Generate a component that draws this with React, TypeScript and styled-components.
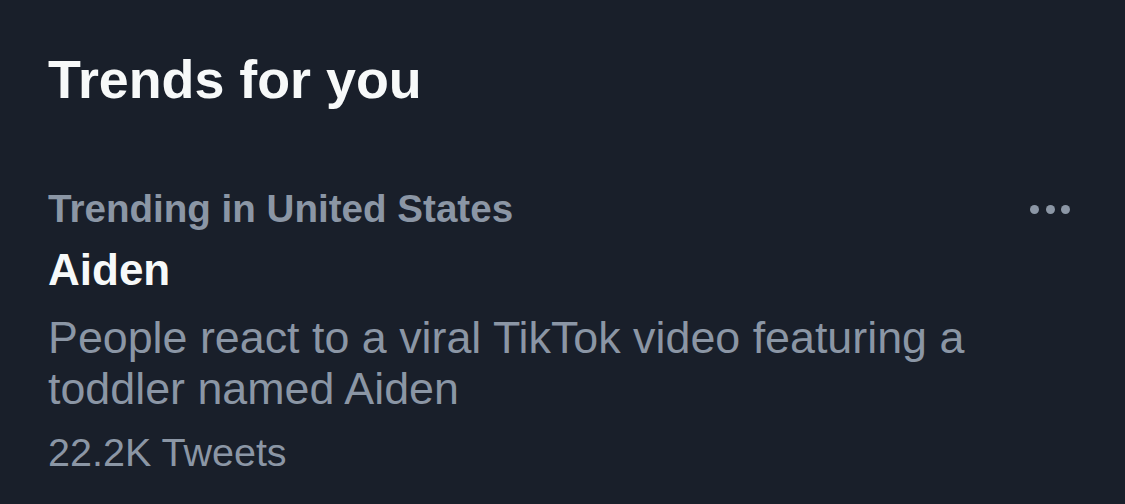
import React from "react";
import styled, { createGlobalStyle } from "styled-components";

const GlobalStyle = createGlobalStyle`
  html, body {
    margin: 0;
    padding: 0;
    background: #191f2a;
  }
  body {
    font-family: "Liberation Sans", Arial, sans-serif;
    -webkit-font-smoothing: antialiased;
  }
`;

const Panel = styled.section`
  width: 1125px;
  height: 504px;
  box-sizing: border-box;
  padding: 47px 48px 0 48px;
  background: #191f2a;
  overflow: hidden;
`;

const Title = styled.h2`
  margin: 0;
  font-size: 53.8px;
  line-height: 64px;
  font-weight: 700;
  color: #f7f9f9;
`;

const Trend = styled.article`
  display: flex;
  flex-direction: column;
  margin-top: 75px;
`;

const TrendHeader = styled.div`
  display: flex;
  align-items: center;
  justify-content: space-between;
`;

const Meta = styled.span`
  font-size: 38.6px;
  line-height: 46px;
  font-weight: 700;
  color: #8b96a5;
`;

const MoreButton = styled.button`
  display: flex;
  align-items: center;
  gap: 6.5px;
  padding: 0;
  margin: 0 7px 0 0;
  border: none;
  background: transparent;
  cursor: pointer;
`;

const Dot = styled.span`
  width: 9px;
  height: 9px;
  border-radius: 50%;
  background: #8b96a5;
`;

const Topic = styled.div`
  margin-top: 12px;
  font-size: 44px;
  line-height: 52px;
  font-weight: 700;
  color: #f7f9f9;
`;

const Description = styled.p`
  margin: 16px 0 0 0;
  font-size: 44.8px;
  line-height: 51px;
  color: #8b96a5;
`;

const Count = styled.span`
  margin-top: 15px;
  font-size: 39.5px;
  line-height: 46px;
  color: #8b96a5;
`;

interface TrendItem {
  readonly context: string;
  readonly topic: string;
  readonly summary: string;
  readonly count: string;
}

const trends: TrendItem[] = [
  {
    context: "Trending in United States",
    topic: "Aiden",
    summary:
      "People react to a viral TikTok video featuring a toddler named Aiden",
    count: "22.2K Tweets",
  },
];

const App: React.FC = () => {
  return (
    <>
      <GlobalStyle />
      <Panel>
        <Title>Trends for you</Title>
        {trends.map((trend, index) => (
          <Trend key={index}>
            <TrendHeader>
              <Meta>{trend.context}</Meta>
              <MoreButton aria-label="More">
                <Dot />
                <Dot />
                <Dot />
              </MoreButton>
            </TrendHeader>
            <Topic>{trend.topic}</Topic>
            <Description>{trend.summary}</Description>
            <Count>{trend.count}</Count>
          </Trend>
        ))}
      </Panel>
    </>
  );
};

export default App;
